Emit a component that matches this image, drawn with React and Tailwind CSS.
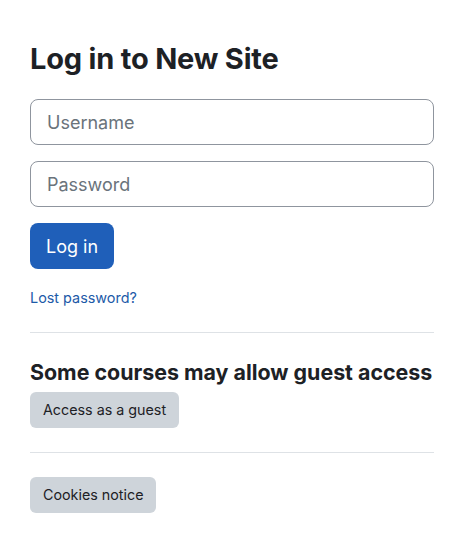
import React from 'react'

function App() {
  return (
    <div className="min-h-[552px] w-[472px] bg-white font-['Inter',sans-serif] text-[#1d2125]">
      <div className="w-[404px] pl-[30px] pt-[40px] box-content">
        <h1 className="text-[29px] leading-[38px] font-bold tracking-[-0.2px]">Log in to New Site</h1>

        {/* login form */}
        <form className="mt-[21px] flex flex-col" onSubmit={(e) => e.preventDefault()}>
          <input
            type="text"
            placeholder="Username"
            className="h-[46px] w-full rounded-[8px] border border-[#8f959e] px-4 text-[18px] outline-none placeholder:text-[#6a737b]"
          />
          <input
            type="password"
            placeholder="Password"
            className="mt-4 h-[46px] w-full rounded-[8px] border border-[#8f959e] px-4 text-[18px] outline-none placeholder:text-[#6a737b]"
          />
          <div className="mt-4">
            <button className="h-[46px] w-[84px] rounded-[8px] bg-[#1f5fb9] text-[18px] text-white">
              Log in
            </button>
          </div>
        </form>

        <div className="mt-[16px]">
          <a href="#" className="text-[14.4px] leading-[20px] text-[#1d5aa8]">
            Lost password?
          </a>
        </div>

        <hr className="mt-[23px] border-t border-[#dee2e6]" />

        {/* guest access */}
        <h2 className="mt-[26px] text-[21.4px] leading-[26px] font-bold">Some courses may allow guest access</h2>
        <button className="mt-[7px] h-[36px] rounded-[6px] bg-[#ced4da] px-[13px] text-[14.3px]">
          Access as a guest
        </button>

        <hr className="mt-[24px] border-t border-[#dee2e6]" />

        <button className="mt-[24px] h-[36px] rounded-[6px] bg-[#ced4da] px-[13px] text-[14.3px]">
          Cookies notice
        </button>
      </div>
    </div>
  )
}

export default App
